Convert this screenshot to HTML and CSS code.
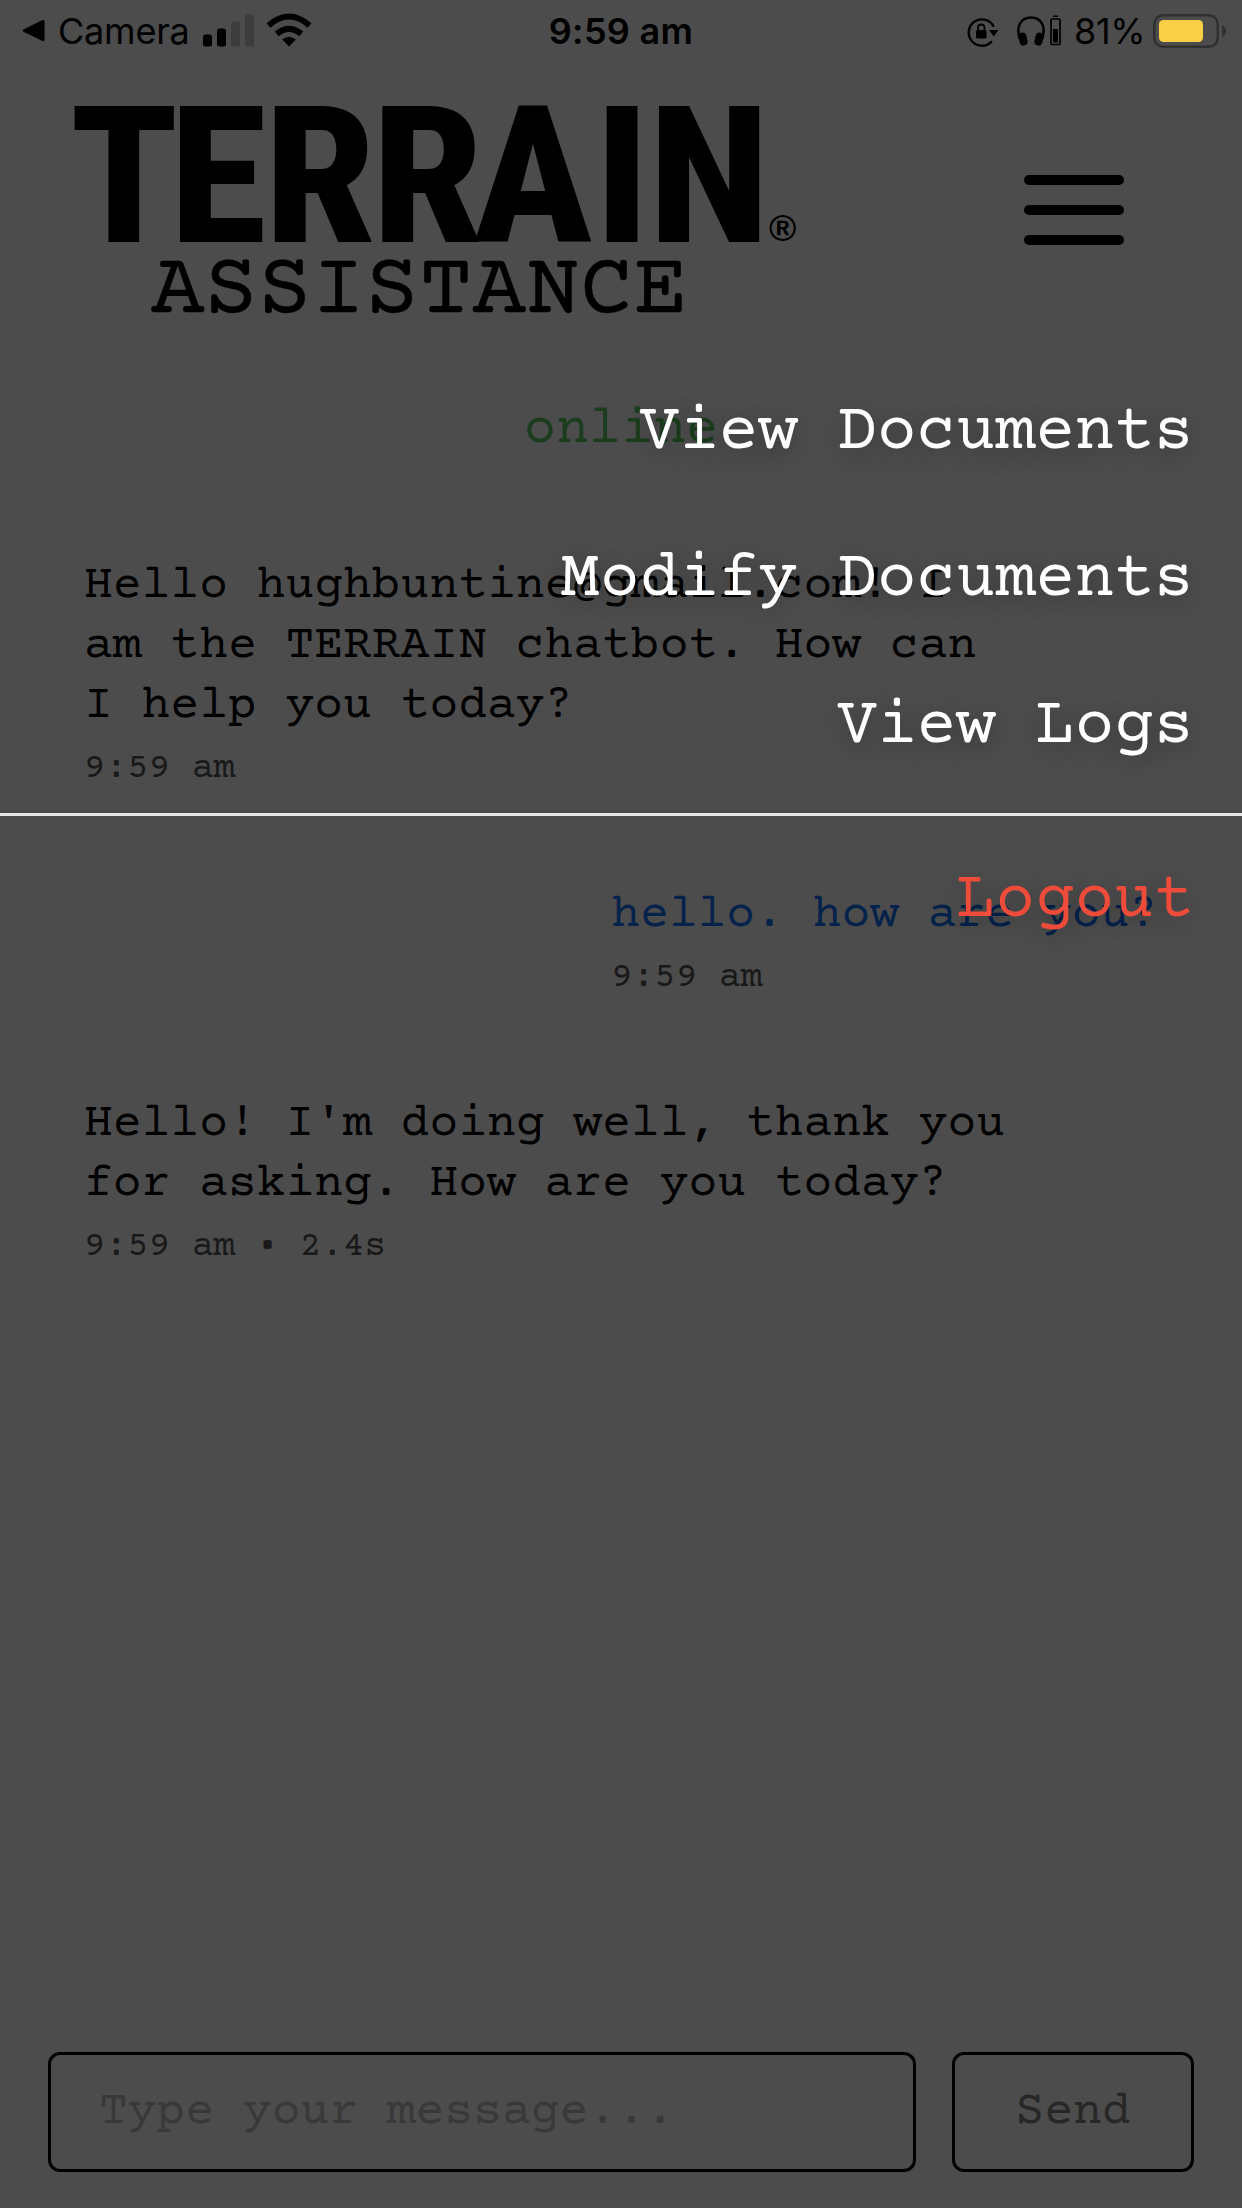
FILE: index.html
```html
<!DOCTYPE html>
<html lang="en">
<head>
<meta charset="utf-8">
<title>TERRAIN Assistance</title>
<link rel="stylesheet" href="styles.css">
</head>
<body>
<div class="app">
  <div class="status">
    <div class="status-left">
      <svg class="back" width="24" height="24" viewBox="0 0 24 24"><path d="M1.5 10.5 20 1.2Q22.5 0 22.500 2.500V20.500Q22.500 23 20 21.800L1.500 12.700Q-.3 11.600 1.500 10.500Z"/></svg>
      <span class="camera">Camera</span>
      <svg class="signal" width="52" height="33" viewBox="0 0 52 33"><rect y="20.500" width="9" height="12" rx="2.500"/><rect x="14" y="14.500" width="9" height="18" rx="2.500"/><g fill="#3c3c3c"><rect x="28" y="7.500" width="9" height="25" rx="2.500"/><rect x="42" y=".5" width="9" height="32" rx="2.500"/></g></svg>
      <svg class="wifi" width="46" height="34" viewBox="0 0 46 34"><path d="M23 33.500 16.200 26.600Q23 21 29.800 26.600Z"/><g fill="none" stroke="#000" stroke-width="6"><path d="M10.700 20.800Q23 10.800 35.300 20.800"/><path d="M2.500 12.400Q23-5.400 43.500 12.400"/></g></svg>
    </div>
    <div class="clock">9:59 am</div>
    <div class="status-right">
      <svg class="lock" width="32" height="30" viewBox="0 0 32 30"><path d="M26.800 9.800A13.200 13.200 0 1 0 24.900 24.200" fill="none" stroke="#000" stroke-width="2.300"/><path d="M22 13H31.500L26.700 19.500Z"/><rect x="9" y="13" width="10.500" height="8.500" rx="1.500"/><path d="M11 14V11Q11 7.500 14.250 7.500T17.500 11V14" fill="none" stroke="#000" stroke-width="1.800"/></svg>
      <svg class="phones" width="45" height="32" viewBox="0 0 45 32"><path d="M3 24C-1.500 12 3.500 2.500 14 2.500S29.500 12 25 24" fill="none" stroke="#000" stroke-width="2.500"/><rect x="2" y="17.500" width="8" height="13" rx="4" transform="rotate(-14 6 24)"/><rect x="18" y="17.500" width="8" height="13" rx="4" transform="rotate(14 22 24)"/><rect x="34" y="4" width="9" height="25.500" rx="1" fill="none" stroke="#000" stroke-width="1.700"/><path d="M36 14H41V27.500H36ZM36 2V.5H41V2Z"/></svg>
      <span class="percent">81%</span>
      <svg class="battery" width="74" height="36" viewBox="0 0 74 36"><rect x="1.250" y="2.250" width="63.500" height="31.500" rx="9" fill="none" stroke="#303030" stroke-width="2.500"/><rect x="6" y="7" width="44" height="22" rx="4.500" fill="#f8cf45"/><path d="M69 12Q73 13.500 73 18T69 24Z" fill="#303030"/></svg>
    </div>
  </div>
  <header class="header">
    <svg class="logo" width="740" height="240" viewBox="60 90 740 240">
      <g transform="scale(1.04 1)"><text class="logo-name" x="67 163 254 357.500 455 572 623.500" y="242">TERRAIN</text></g>
      <text class="logo-reg" x="769" y="241">®</text>
      <text class="logo-sub" x="151" y="311.500">ASSISTANCE</text>
    </svg>
    <div class="burger"><span></span><span></span><span></span></div>
  </header>
  <div class="presence">online</div>
  <main class="chat">
    <div class="message"><p>Hello hughbuntine@gmail.com! I<br>am the TERRAIN chatbot. How can<br>I help you today?</p><time>9:59 am</time></div>
    <div class="message mine"><p>hello. how are you?</p><time>9:59 am</time></div>
    <div class="message"><p>Hello! I'm doing well, thank you<br>for asking. How are you today?</p><time>9:59 am • 2.4s</time></div>
  </main>
  <form class="composer">
    <div class="field">Type your message...</div>
    <div class="send">Send</div>
  </form>
  <nav class="menu">
    <a>View Documents</a>
    <a>Modify Documents</a>
    <a>View Logs</a>
    <a class="logout">Logout</a>
  </nav>
</div>
</body>
</html>
```
FILE: styles.css
```css
* { box-sizing: border-box; }
body { margin: 0; background: #4c4c4c; color: #000; }
p { margin: 0; }
svg { display: block; flex: none; }
.app {
  position: relative;
  display: flex;
  flex-direction: column;
  width: 1242px;
  height: 2208px;
  overflow: hidden;
  font: 48px/60px "Courier Prime", "FreeMono", "Liberation Mono", monospace;
}
.status {
  display: grid;
  grid-template-columns: 1fr 200px 1fr;
  height: 60px;
  padding-top: 1px;
  font: 36px/60px Inter, sans-serif;
}
.status-left, .status-right { display: flex; align-items: flex-start; }
.back { margin: 18px 0 0 22px; }
.camera { width: 142px; margin-left: 12px; letter-spacing: -.2px; }
.signal { margin: 13px 0 0 3px; }
.wifi { margin: 12px 0 0 11px; }
.clock { text-align: center; font-weight: 600; letter-spacing: .3px; }
.status-right { justify-content: flex-end; padding-right: 15px; }
.lock { margin: 16px 18px 0 0; }
.phones { margin-top: 14px; }
.percent { width: 71px; margin-left: 12px; white-space: nowrap; letter-spacing: -.3px; }
.battery { margin: 12px 0 0 8px; }
.header {
  display: flex;
  justify-content: space-between;
  height: 336px;
  padding: 30px 118px 0 60px;
}
.logo { overflow: visible; }
.logo-name { font: 780 191px "Roboto Condensed", Roboto, sans-serif; font-stretch: 75%; }
.logo-reg { font: bold 37px "Liberation Sans", sans-serif; }
.logo-sub { font: 89.400px "Courier Prime", "FreeMono", "Liberation Mono", monospace; stroke: #000; stroke-width: .4px; }
.burger { display: flex; flex-direction: column; gap: 20px; padding-top: 85px; }
.burger span { width: 100px; height: 10px; border-radius: 5px; background: #000; }
.presence { height: 68px; font-size: 54px; line-height: 68px; text-align: center; color: #1b3d1d; }
.chat { display: flex; flex-direction: column; align-items: flex-start; gap: 93px; flex: 1; padding: 92px 84px 0; }
.message time { display: block; margin-top: 11px; font-size: 36px; line-height: 45px; color: #191919; }
.mine { align-self: flex-end; color: #05224a; }
.composer { display: flex; gap: 36px; height: 156px; padding: 0 48px 36px; }
.field, .send { border: 3px solid #000; border-radius: 12px; line-height: 114px; }
.field { flex: 1; padding-left: 48px; color: #393939; }
.send { width: 242px; text-align: center; color: #272727; }
.menu {
  position: absolute;
  inset: 394px 0 auto;
  display: flex;
  flex-direction: column;
  gap: 67px;
  text-align: right;
  font-size: 66px;
  line-height: 80px;
  color: #fff;
  text-shadow: 0 6px 24px rgba(0, 0, 0, .3);
}
.menu a { padding-right: 48.500px; }
.logout { margin-top: -22px; padding-top: 46px; border-top: 3px solid #e8e8ec; color: #ee4b3b; }
```
